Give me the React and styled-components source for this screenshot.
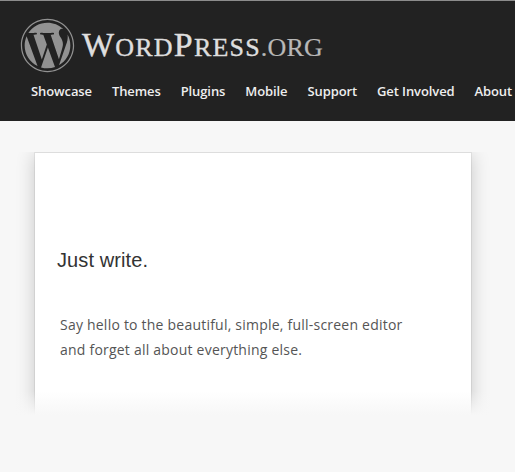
import React from 'react';
import styled, { createGlobalStyle } from 'styled-components';
import { FaWordpress } from 'react-icons/fa';

const GlobalStyle = createGlobalStyle`
  html, body {
    margin: 0;
    padding: 0;
    background: #f7f7f7;
  }
  body {
    overflow: hidden;
    font-family: "Open Sans", sans-serif;
  }
`;

const Page = styled.div`
  width: 515px;
  height: 472px;
  overflow: hidden;
`;

const Header = styled.header`
  box-sizing: border-box;
  height: 121px;
  background: #222222;
  border-top: 1px solid #8c8c8c;
  padding: 17px 0 0 20px;
`;

const Brand = styled.div`
  display: flex;
  align-items: center;
  gap: 7px;
  height: 55px;
  color: #929292;
`;

const Wordmark = styled.h1`
  margin: 0 0 2px;
  font-family: "Liberation Serif", serif;
  font-weight: 400;
  font-size: 26px;
  line-height: 1;
  letter-spacing: 1.2px;
  white-space: nowrap;
  color: #dedede;
  text-transform: uppercase;
  -webkit-text-stroke: 0.4px #dedede;
`;

const Cap = styled.span`
  font-size: 34px;
`;

const Org = styled.span`
  letter-spacing: 0.2px;
  color: #b8b8b8;
  -webkit-text-stroke: 0.2px #b8b8b8;
`;

const Nav = styled.nav`
  display: flex;
  gap: 20px;
  margin: 9px 0 0 11px;
  white-space: nowrap;
`;

const NavLink = styled.a`
  font-size: 13px;
  line-height: 18px;
  font-weight: 600;
  letter-spacing: -0.1px;
  color: #eeeeee;
  text-decoration: none;
`;

const Content = styled.main`
  padding: 31px 44px 0 35px;
`;

const CardClip = styled.div`
  position: relative;
  height: 263px;
  margin: 0 -30px 0 -30px;
  padding: 0 30px;
  overflow: hidden;
`;

const Card = styled.section`
  box-sizing: border-box;
  height: 300px;
  background: #ffffff;
  border-top: 1px solid #dddddd;
  box-shadow: 0 0 1px rgba(0, 0, 0, 0.35), 0 2px 18px rgba(0, 0, 0, 0.2);
  padding: 92px 22px 0;
`;

const Fade = styled.div`
  position: absolute;
  left: 0;
  right: 0;
  bottom: 0;
  height: 24px;
  background: linear-gradient(to bottom, rgba(247, 247, 247, 0), #f7f7f7);
`;

const Title = styled.h2`
  margin: 0;
  font-family: "Liberation Sans", sans-serif;
  font-weight: 400;
  font-size: 20px;
  line-height: 30px;
  letter-spacing: 0.1px;
  color: #333333;
`;

const Lead = styled.p`
  margin: 38px 0 0 3px;
  font-size: 14px;
  line-height: 24.5px;
  letter-spacing: 0.22px;
  color: #555555;
`;

const navItems = ['Showcase', 'Themes', 'Plugins', 'Mobile', 'Support', 'Get Involved', 'About'];

export default function App() {
  return (
    <Page>
      <GlobalStyle />
      <Header>
        <Brand>
          <FaWordpress size={55} />
          <Wordmark>
            <Cap>W</Cap>ord<Cap>P</Cap>ress<Org>.org</Org>
          </Wordmark>
        </Brand>
        <Nav>
          {navItems.map((item) => (
            <NavLink key={item} href="#">{item}</NavLink>
          ))}
        </Nav>
      </Header>
      <Content>
        <CardClip>
          <Card>
            <Title>Just write.</Title>
            <Lead>
              Say hello to the beautiful, simple, full-screen editor
              <br />
              and forget all about everything else.
            </Lead>
          </Card>
          <Fade />
        </CardClip>
      </Content>
    </Page>
  );
}
